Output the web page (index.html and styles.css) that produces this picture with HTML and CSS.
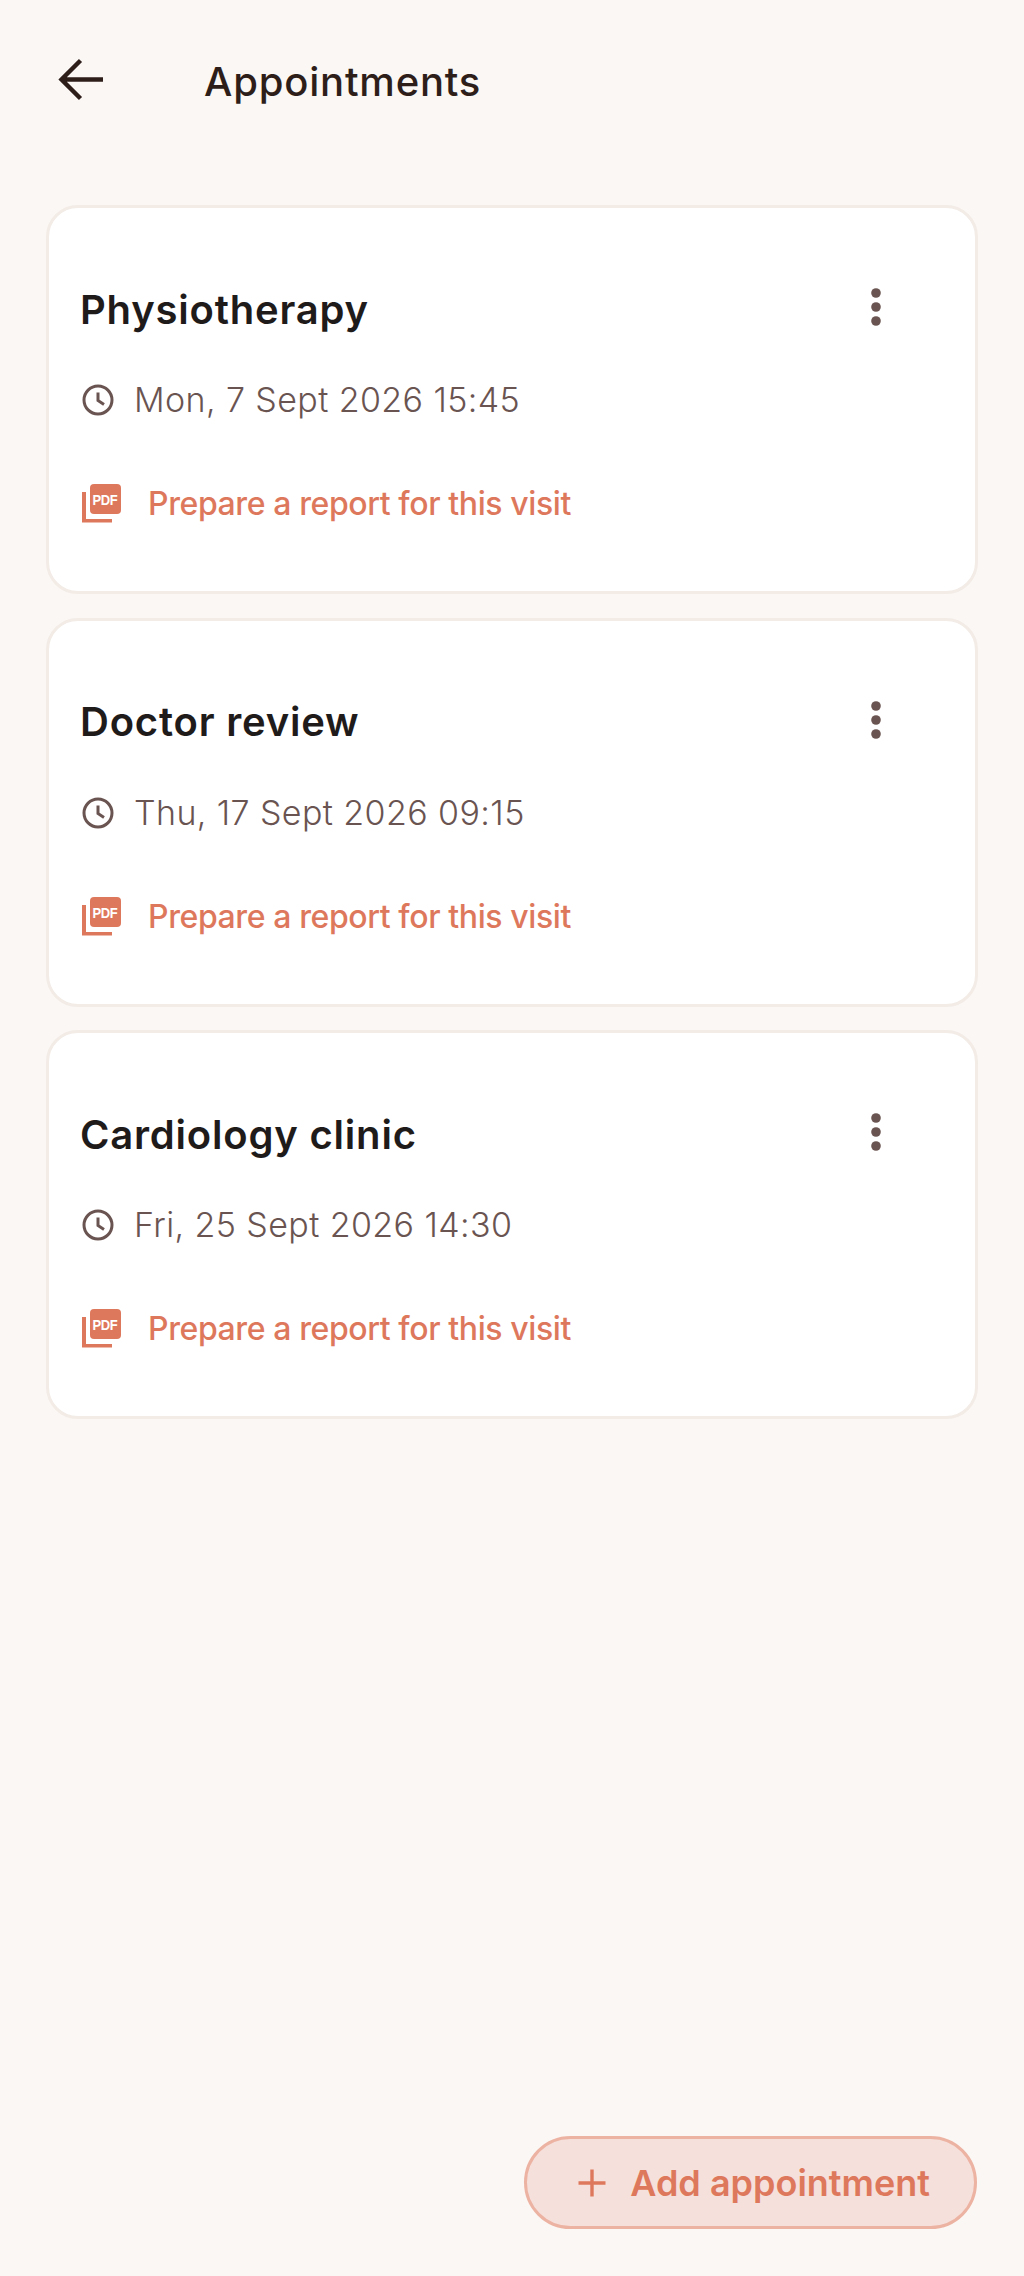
FILE: index.html
```html
<!doctype html>
<html>
  <head>
    <meta charset="UTF-8" />
    <title>Appointments</title>
    <link rel="stylesheet" href="styles.css">
  </head>
  <body>
    <header class="top-bar">
      <button class="back-button" type="button" aria-label="Back">
        <svg width="48" height="48" viewBox="0 0 48 48"><path d="M47 22.500H5.500M24.500 3.500 5.500 22.500 24.500 41.500" fill="none" stroke="#2e1e1a" stroke-width="4.400"/></svg>
      </button>
      <h1 class="page-title">Appointments</h1>
    </header>

    <main class="card-list">
      <article class="card">
        <div class="card-head">
          <h2 class="card-title">Physiotherapy</h2>
          <svg class="more-icon" width="12" height="40" viewBox="0 0 12 40"><circle cx="6" cy="6" r="4.800"/><circle cx="6" cy="20" r="4.800"/><circle cx="6" cy="34" r="4.800"/></svg>
        </div>
        <p class="card-time">
          <svg class="clock-icon" width="32" height="32" viewBox="0 0 32 32"><circle cx="16" cy="16" r="14"/><path d="M16 8.500V16.500L22 20.500"/></svg>
          Mon, 7 Sept 2026 15:45
        </p>
        <a class="card-link" href="#">
          <svg class="pdf-icon" width="40" height="40" viewBox="0 0 40 40"><path d="M0 8H4V35H30V38.500H0Z"/><rect x="8" y="0" width="31" height="30" rx="4"/><text transform="translate(10.500 21) scale(1 1.150)">PDF</text></svg>
          Prepare a report for this visit
        </a>
      </article>

      <article class="card">
        <div class="card-head">
          <h2 class="card-title">Doctor review</h2>
          <svg class="more-icon" width="12" height="40" viewBox="0 0 12 40"><circle cx="6" cy="6" r="4.800"/><circle cx="6" cy="20" r="4.800"/><circle cx="6" cy="34" r="4.800"/></svg>
        </div>
        <p class="card-time">
          <svg class="clock-icon" width="32" height="32" viewBox="0 0 32 32"><circle cx="16" cy="16" r="14"/><path d="M16 8.500V16.500L22 20.500"/></svg>
          Thu, 17 Sept 2026 09:15
        </p>
        <a class="card-link" href="#">
          <svg class="pdf-icon" width="40" height="40" viewBox="0 0 40 40"><path d="M0 8H4V35H30V38.500H0Z"/><rect x="8" y="0" width="31" height="30" rx="4"/><text transform="translate(10.500 21) scale(1 1.150)">PDF</text></svg>
          Prepare a report for this visit
        </a>
      </article>

      <article class="card">
        <div class="card-head">
          <h2 class="card-title">Cardiology clinic</h2>
          <svg class="more-icon" width="12" height="40" viewBox="0 0 12 40"><circle cx="6" cy="6" r="4.800"/><circle cx="6" cy="20" r="4.800"/><circle cx="6" cy="34" r="4.800"/></svg>
        </div>
        <p class="card-time">
          <svg class="clock-icon" width="32" height="32" viewBox="0 0 32 32"><circle cx="16" cy="16" r="14"/><path d="M16 8.500V16.500L22 20.500"/></svg>
          Fri, 25 Sept 2026 14:30
        </p>
        <a class="card-link" href="#">
          <svg class="pdf-icon" width="40" height="40" viewBox="0 0 40 40"><path d="M0 8H4V35H30V38.500H0Z"/><rect x="8" y="0" width="31" height="30" rx="4"/><text transform="translate(10.500 21) scale(1 1.150)">PDF</text></svg>
          Prepare a report for this visit
        </a>
      </article>
    </main>

    <button class="add-button" type="button">
      <svg width="28" height="28" viewBox="0 0 28 28"><path d="M14 0.500V27.500M0.500 14H27.500" fill="none" stroke="#de785c" stroke-width="3.400"/></svg>
      Add appointment
    </button>
  </body>
</html>
```

FILE: styles.css
```css
* {
  margin: 0;
  padding: 0;
  box-sizing: border-box;
}

html,
body {
  height: 100%;
}

body {
  display: flex;
  flex-direction: column;
  background: #fbf7f4;
  font-family: Inter, "Noto Sans", sans-serif;
}

.top-bar {
  display: flex;
  align-items: center;
  height: 162px;
  padding-left: 56px;
}

.back-button {
  display: flex;
  border: 0;
  background: none;
  cursor: pointer;
}

.page-title {
  margin-left: 100px;
  font-size: 40px;
  font-weight: 500;
  letter-spacing: 0.8px;
  color: #2e1e1a;
}

.card-list {
  display: flex;
  flex-direction: column;
  gap: 23.500px;
  margin: 43px 46px 0;
}

.card {
  display: flex;
  flex-direction: column;
  height: 389px;
  padding: 0 32px;
  border: 3px solid #f2ebe6;
  border-radius: 32px;
  background: #fff;
}

.card-head {
  display: flex;
  align-items: center;
  justify-content: space-between;
  height: 44px;
  margin-top: 79px;
  padding-right: 61px;
}

.card-title {
  margin-left: -1px;
  font-size: 40px;
  font-weight: 600;
  letter-spacing: 0.8px;
  color: #1f1b1b;
}

.more-icon {
  margin-top: -4px;
  fill: #6a5451;
}

.card-time {
  display: flex;
  align-items: center;
  gap: 20px;
  margin-top: 47px;
  font-size: 34px;
  font-weight: 350;
  letter-spacing: 0.4px;
  line-height: 44px;
  color: #6a5451;
}

.clock-icon {
  flex: none;
  margin-left: 1px;
  fill: none;
  stroke: #6a5451;
  stroke-width: 3;
}

.card-link {
  display: flex;
  align-items: center;
  gap: 26px;
  margin-top: 60px;
  font-size: 32px;
  font-weight: 500;
  letter-spacing: -0.4px;
  line-height: 44px;
  color: #de785c;
  text-decoration: none;
}

.pdf-icon {
  flex: none;
  margin-left: 1px;
  fill: #de785c;
}

.pdf-icon text {
  font-family: "Liberation Sans", sans-serif;
  font-size: 13px;
  font-weight: 700;
  fill: #fff;
}

.add-button {
  display: flex;
  align-items: center;
  gap: 24px;
  align-self: flex-end;
  height: 93px;
  margin: auto 47px 47px 0;
  padding: 0 44px 0 51px;
  border: 3px solid #ecb3a3;
  border-radius: 47px;
  background: #f6e0db;
  font-family: inherit;
  font-size: 36px;
  font-weight: 600;
  color: #de785c;
  cursor: pointer;
}
```
